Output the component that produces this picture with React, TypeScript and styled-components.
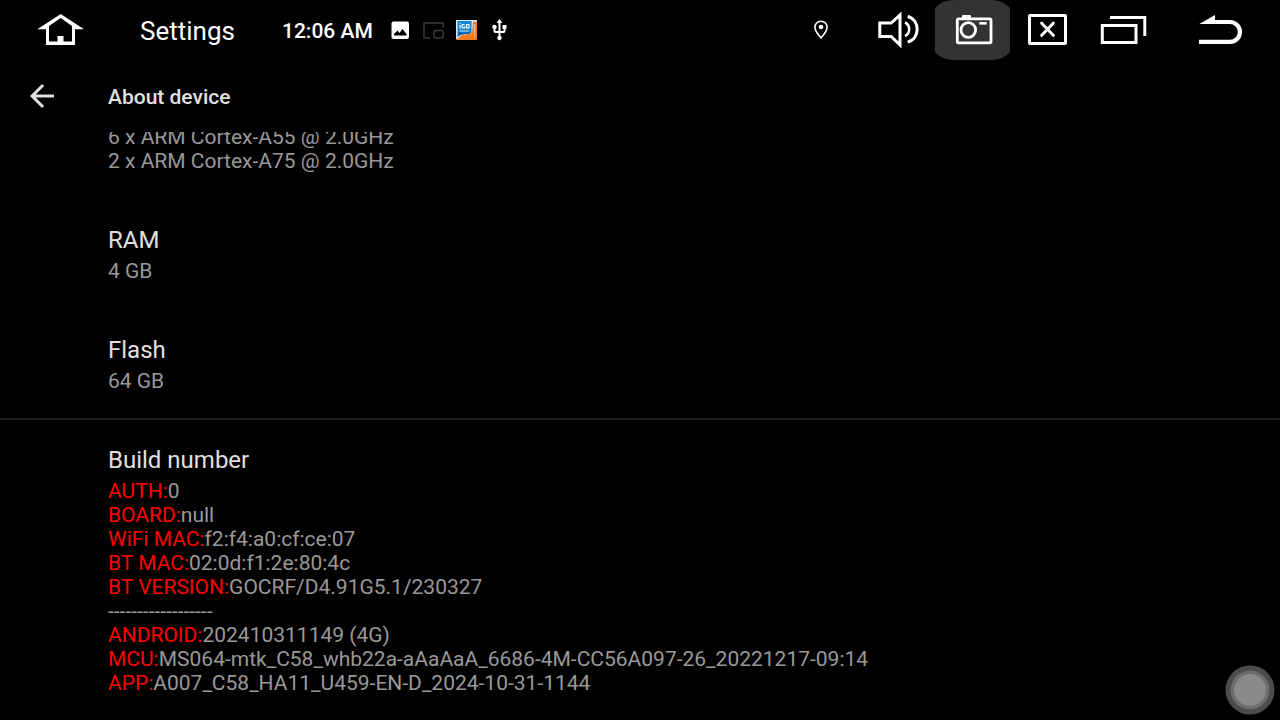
import React from "react";
import styled, { createGlobalStyle } from "styled-components";

const GlobalStyle = createGlobalStyle`
  * { box-sizing: border-box; }
  body {
    margin: 0;
    background: #000;
    color: #e0e0e0;
    font-family: Roboto, "Liberation Sans", sans-serif;
  }
`;

const Screen = styled.div`
  display: flex;
  flex-direction: column;
  height: 100vh;
  overflow: hidden;
`;

const StatusBar = styled.header`
  display: flex;
  align-items: center;
  flex: none;
  height: 60px;
  color: #fff;
`;

const BarButton = styled.button<{ $wide?: boolean; $active?: boolean }>`
  position: relative;
  display: block;
  flex: none;
  width: ${(p) => (p.$wide ? 120 : 75)}px;
  height: 60px;
  padding: 0;
  border: 0;
  overflow: hidden;
  background: none;
  color: inherit;
  cursor: pointer;

  &::before {
    content: "";
    position: absolute;
    inset: 0 -6px;
    border-radius: 24px;
    background: ${(p) => (p.$active ? "#333" : "transparent")};
  }

  svg {
    position: relative;
    display: block;
  }
`;

const AppName = styled.span`
  width: 142px;
  margin-left: 20px;
  padding-top: 2px;
  font-size: 26px;
  line-height: 32px;
`;

const Clock = styled.time`
  padding-top: 2px;
  font-size: 21px;
  font-weight: 500;
  line-height: 24px;
`;

const Notifications = styled.div`
  display: flex;
  align-items: center;
  gap: 12px;
  margin-left: 17px;
`;

const SystemKeys = styled.nav`
  display: flex;
  align-items: center;
  margin-left: auto;
`;

const PinSlot = styled.span`
  display: flex;
  margin-right: 31px;
`;

const PageHeader = styled.div`
  display: flex;
  align-items: center;
  flex: none;
  height: 72px;
  padding-left: 24px;
`;

const BackButton = styled.button`
  display: flex;
  width: 84px;
  padding: 0;
  border: 0;
  background: none;
  color: #e0e0e0;
  cursor: pointer;
`;

const PageTitle = styled.h1`
  margin: 0;
  padding-top: 2px;
  font-size: 21px;
  font-weight: 500;
  line-height: 24px;
`;

const Viewport = styled.main`
  flex: 1;
  min-height: 0;
  overflow: hidden;
`;

const List = styled.div`
  margin-top: -7px;
`;

const Item = styled.section<{ $divided?: boolean; $continued?: boolean }>`
  padding: ${(p) => (p.$continued ? 0 : p.$divided ? 26 : 28)}px 24px 25px 108px;
  border-top: ${(p) => (p.$divided ? "2px solid #1f1f1f" : "0")};
`;

const ItemTitle = styled.h2`
  margin: 0 0 5px;
  font-size: 24px;
  font-weight: 400;
  line-height: 28px;
`;

const Line = styled.p`
  margin: 0;
  color: #999;
  font-size: 21px;
  line-height: 24px;
`;

const Key = styled.span`
  color: #f00;
`;

const AssistButton = styled.button`
  position: fixed;
  right: 5px;
  bottom: 5px;
  padding: 0;
  border: 0;
  background: none;
  cursor: pointer;

  svg { display: block; }
`;

const build: [string, string][] = [
  ["AUTH:", "0"],
  ["BOARD:", "null"],
  ["WiFi MAC:", "f2:f4:a0:cf:ce:07"],
  ["BT MAC:", "02:0d:f1:2e:80:4c"],
  ["BT VERSION:", "GOCRF/D4.91G5.1/230327"],
  ["", "------------------"],
  ["ANDROID:", "202410311149 (4G)"],
  ["MCU:", "MS064-mtk_C58_whb22a-aAaAaA_6686-4M-CC56A097-26_20221217-09:14"],
  ["APP:", "A007_C58_HA11_U459-EN-D_2024-10-31-1144"],
];

const HomeIcon = () => (
  <svg width="120" height="60" viewBox="0 0 120 60" fill="currentColor" fillRule="evenodd">
    <path d="M60.7 14 84 29.3H75V45H46V29.3H37.3ZM60.7 18 49 26V41.5H57.5V36H63.5V41.5H72V26Z" />
  </svg>
);

const VolumeIcon = () => (
  <svg width="75" height="60" viewBox="0 0 75 60" fill="none" stroke="currentColor" strokeWidth="3">
    <path d="M19.8 23H31.2L40 15V45L31.2 36.5H19.8Z" />
    <path d="M45 22.5C50.500 25 50.500 33.500 45 36" strokeWidth="2.500" />
    <path d="M47.700 16.500C60.300 20 60.300 38.500 47.700 42" />
  </svg>
);

const CameraIcon = () => (
  <svg width="75" height="60" viewBox="0 0 75 60" fill="none" stroke="currentColor">
    <rect x="22.300" y="18.800" width="33.700" height="24" rx="1.200" strokeWidth="2.800" />
    <path d="M27 18V16Q27 15 28 15H35Q36 15 36 16V18Z" fill="currentColor" stroke="none" />
    <circle cx="33.300" cy="30" r="7.300" strokeWidth="2.800" />
    <path d="M44.300 23.300H51.700" strokeWidth="2.600" />
  </svg>
);

const CloseIcon = () => (
  <svg width="75" height="60" viewBox="0 0 75 60" fill="none" stroke="currentColor" strokeWidth="3">
    <rect x="19.500" y="15.500" width="36" height="28" rx=".5" />
    <path d="M31.700 23.200 43.300 35.300M43.300 23.200 31.700 35.300" strokeLinecap="round" />
  </svg>
);

const RecentsIcon = () => (
  <svg width="75" height="60" viewBox="0 0 75 60" fill="none" stroke="currentColor" strokeWidth="3">
    <path d="M17.300 25.500H51V42.500H17.300ZM25 17.500H59.800V36" />
  </svg>
);

const ReturnIcon = () => (
  <svg width="120" height="60" viewBox="0 0 120 60" fill="none">
    <path d="M50 22H70A9.900 9.900 0 0 1 70 41.900H39" stroke="currentColor" strokeWidth="4.200" />
    <path d="M39.300 24.100 55 15V24.100Z" fill="currentColor" />
  </svg>
);

const PinIcon = () => (
  <svg width="16" height="20" viewBox="0 0 16 20" fill="none">
    <path d="M8 1.200C4.400 1.200 1.900 3.900 1.900 7.200 1.900 11.100 5.400 14.800 8 18 10.600 14.800 14.100 11.100 14.100 7.200 14.100 3.900 11.600 1.200 8 1.200Z" stroke="currentColor" strokeWidth="1.600" />
    <circle cx="8" cy="7" r="2.300" fill="currentColor" />
  </svg>
);

const PictureIcon = () => (
  <svg width="20" height="20" viewBox="0 0 20 20">
    <rect x="1.500" y="1.500" width="17.500" height="17.500" rx="2" fill="#fff" />
    <path d="M4 15.500V14L7.500 10.500 9.500 13 12.500 9 16.500 14V15.500Z" fill="#000" />
  </svg>
);

const PipIcon = () => (
  <svg width="22" height="20" viewBox="0 0 22 20" fill="none" stroke="#3c3c3c" strokeWidth="1.500">
    <path d="M8 18H2V3H21.200V7.500" />
    <path d="M13 10.500H20.200L21.200 11.500V17L20.200 18H13L12 17V11.500Z" />
  </svg>
);

const NavAppIcon = () => (
  <svg width="22" height="20" viewBox="0 0 22 20">
    <rect width="21" height="20" rx="1" fill="#f47b20" />
    <path d="M0 0H21V1.500L17 2 16 13.500 5 15.500 2 18.500 0 19Z" fill="#d9e9f5" />
    <path d="M1.500 1H15.500V13L4.500 14.500 1.500 17.500Z" fill="#1683d2" />
    <path d="M2.500 12.500H14.500V13.500L4.500 14.800 2.500 16Z" fill="#0754a0" />
    <g stroke="#fff" fill="none" strokeWidth="1.200">
      <path d="M4 5V8.500M4 3.300V4.100M8.500 4.500H6.200V8H8.500V6.500M10.500 4.500H13V8H10.500Z" />
      <path d="M4 11H13" strokeDasharray="1.500 .6" />
      <path d="M18.600 4V17" stroke="#ffd1a8" strokeDasharray="1.500 .7" />
    </g>
  </svg>
);

const UsbIcon = () => (
  <svg width="20" height="22" viewBox="2.500 1 20 22" fill="currentColor">
    <path d="M15 7v4h1v2h-3V5h2l-3-4-3 4h2v8H8v-2.070c.7-.37 1.200-1.080 1.200-1.930 0-1.210-.99-2.200-2.200-2.200-1.210 0-2.200.99-2.200 2.200 0 .85.5 1.560 1.200 1.930V13c0 1.110.89 2 2 2h3v3.050c-.71.37-1.200 1.100-1.200 1.950 0 1.220.99 2.200 2.200 2.200 1.210 0 2.200-.98 2.200-2.200 0-.85-.49-1.580-1.200-1.950V15h3c1.110 0 2-.89 2-2v-2h1V7h-4z" />
  </svg>
);

const ArrowIcon = () => (
  <svg width="36" height="36" viewBox="0 0 24 24" fill="currentColor">
    <path d="M20 11H7.830l5.590-5.590L12 4l-8 8 8 8 1.410-1.410L7.830 13H20v-2z" />
  </svg>
);

export default function App() {
  return (
    <Screen>
      <GlobalStyle />
      <StatusBar>
        <BarButton $wide aria-label="Home"><HomeIcon /></BarButton>
        <AppName>Settings</AppName>
        <Clock>12:06 AM</Clock>
        <Notifications>
          <PictureIcon />
          <PipIcon />
          <NavAppIcon />
          <UsbIcon />
        </Notifications>
        <SystemKeys>
          <PinSlot><PinIcon /></PinSlot>
          <BarButton aria-label="Volume"><VolumeIcon /></BarButton>
          <BarButton $active aria-label="Screenshot"><CameraIcon /></BarButton>
          <BarButton aria-label="Close"><CloseIcon /></BarButton>
          <BarButton aria-label="Recent apps"><RecentsIcon /></BarButton>
          <BarButton $wide aria-label="Back"><ReturnIcon /></BarButton>
        </SystemKeys>
      </StatusBar>
      <PageHeader>
        <BackButton aria-label="Navigate up"><ArrowIcon /></BackButton>
        <PageTitle>About device</PageTitle>
      </PageHeader>
      <Viewport>
        <List>
          <Item $continued>
            <Line>6 x ARM Cortex-A55 @ 2.0GHz</Line>
            <Line>2 x ARM Cortex-A75 @ 2.0GHz</Line>
          </Item>
          <Item>
            <ItemTitle>RAM</ItemTitle>
            <Line>4 GB</Line>
          </Item>
          <Item>
            <ItemTitle>Flash</ItemTitle>
            <Line>64 GB</Line>
          </Item>
          <Item $divided>
            <ItemTitle>Build number</ItemTitle>
            {build.map(([key, value]) => (
              <Line key={key}>
                {key && <Key>{key}</Key>}
                {value}
              </Line>
            ))}
          </Item>
        </List>
      </Viewport>
      <AssistButton aria-label="Assistive touch">
        <svg width="50" height="50" viewBox="0 0 50 50">
          <circle cx="25" cy="25" r="24.500" fill="#4c4c4c" />
          <circle cx="25" cy="25" r="19.500" fill="#6c6c6c" />
          <circle cx="25" cy="25" r="16" fill="#8a8a8a" />
        </svg>
      </AssistButton>
    </Screen>
  );
}
